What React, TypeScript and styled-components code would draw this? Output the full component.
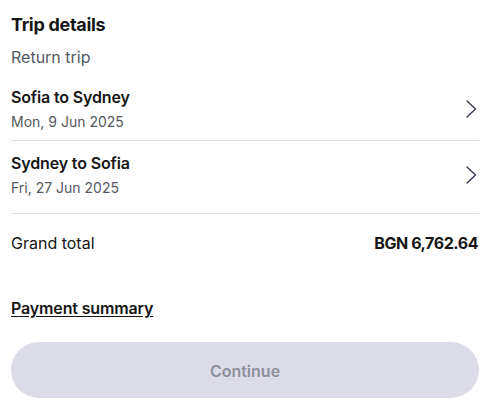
import React from "react";
import styled, { createGlobalStyle } from "styled-components";

const Global = createGlobalStyle`
  html, body { margin: 0; padding: 0; background: #ffffff; }
  body { font-family: Inter, "Noto Sans", "Liberation Sans", sans-serif; color: #161616; }
  * { box-sizing: border-box; }
`;

const Page = styled.div`
  width: 496px;
  padding: 13px 17px 0 11px;
  display: flex;
  flex-direction: column;
`;

const Title = styled.h2`
  margin: 0;
  font-size: 18px;
  line-height: 24px;
  font-weight: 700;
  letter-spacing: -0.3px;
  color: #161616;
`;

const Subtitle = styled.div`
  margin-top: 8px;
  font-size: 16px;
  line-height: 24px;
  color: #545860;
`;

const Legs = styled.div`
  margin-top: 11px;
  display: flex;
  flex-direction: column;
`;

const Leg = styled.div<{ $top: number; $bottom: number }>`
  display: flex;
  align-items: center;
  justify-content: space-between;
  padding: ${(p) => p.$top}px 0 ${(p) => p.$bottom}px;
  border-bottom: 1px solid #dfdfe8;
  cursor: pointer;
`;

const LegText = styled.div`
  display: flex;
  flex-direction: column;
  gap: 3px;
`;

const LegTitle = styled.div`
  font-size: 16px;
  line-height: 24px;
  font-weight: 600;
  letter-spacing: -0.15px;
  color: #161616;
`;

const LegDate = styled.div`
  font-size: 14px;
  line-height: 20px;
  color: #545860;
`;

const Chevron = styled.svg`
  width: 24px;
  height: 24px;
  flex: none;
  margin-right: -4px;
`;

const TotalRow = styled.div`
  margin-top: 17px;
  height: 24px;
  display: flex;
  justify-content: space-between;
  align-items: center;
  font-size: 16px;
  line-height: 24px;
`;

const TotalLabel = styled.span`
  color: #161616;
`;

const TotalValue = styled.span`
  font-weight: 700;
  letter-spacing: -0.45px;
  color: #161616;
  margin-right: 1px;
`;

const SummaryLink = styled.a`
  margin-top: 41px;
  align-self: flex-start;
  font-size: 16px;
  line-height: 24px;
  font-weight: 600;
  letter-spacing: -0.15px;
  color: #161616;
  text-decoration: underline;
  text-underline-offset: 2px;
  cursor: pointer;
`;

const ContinueButton = styled.button`
  margin-top: 22px;
  height: 56px;
  width: 100%;
  padding: 2px 0 0;
  border: none;
  border-radius: 28px;
  background: #dbdce8;
  color: #8e9099;
  font-family: inherit;
  font-size: 16px;
  font-weight: 600;
`;

const ChevronIcon = () => (
  <Chevron viewBox="0 0 24 24" fill="none">
    <path d="M8 4l8.5 8L8 20" stroke="#3b3a55" strokeWidth="1.4" strokeLinecap="round" strokeLinejoin="round" />
  </Chevron>
);

const legs = [
  { title: "Sofia to Sydney", date: "Mon, 9 Jun 2025", top: 5, bottom: 8 },
  { title: "Sydney to Sofia", date: "Fri, 27 Jun 2025", top: 10, bottom: 15 },
];

export default function App() {
  return (
    <>
      <Global />
      <Page>
        <Title>Trip details</Title>
        <Subtitle>Return trip</Subtitle>
        <Legs>
          {legs.map((l) => (
            <Leg key={l.title} $top={l.top} $bottom={l.bottom}>
              <LegText>
                <LegTitle>{l.title}</LegTitle>
                <LegDate>{l.date}</LegDate>
              </LegText>
              <ChevronIcon />
            </Leg>
          ))}
        </Legs>
        <TotalRow>
          <TotalLabel>Grand total</TotalLabel>
          <TotalValue>BGN 6,762.64</TotalValue>
        </TotalRow>
        <SummaryLink>Payment summary</SummaryLink>
        <ContinueButton disabled>Continue</ContinueButton>
      </Page>
    </>
  );
}
